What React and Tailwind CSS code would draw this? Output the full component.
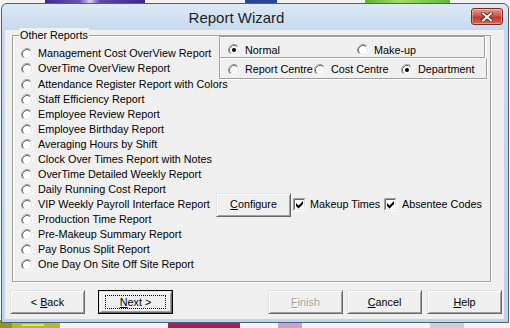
import React from "react";

const reports = [
  "Management Cost OverView Report",
  "OverTime OverView Report",
  "Attendance Register Report with Colors",
  "Staff Efficiency Report",
  "Employee Review Report",
  "Employee Birthday Report",
  "Averaging Hours by Shift",
  "Clock Over Times Report with Notes",
  "OverTime Detailed Weekly Report",
  "Daily Running Cost Report",
  "VIP Weekly Payroll Interface Report",
  "Production Time Report",
  "Pre-Makeup Summary Report",
  "Pay Bonus Split Report",
  "One Day On Site Off Site Report",
];

function Radio({ checked }) {
  return (
    <svg width="12" height="12" viewBox="0 0 12 12" className="block shrink-0">
      <circle cx="6" cy="6" r="4.5" fill="#fff" />
      <path d="M2.11 9.89 A5.5 5.5 0 0 1 9.89 2.11" fill="none" stroke="#a0a0a0" />
      <path d="M9.89 2.11 A5.5 5.5 0 0 1 2.11 9.89" fill="none" stroke="#ffffff" />
      <path d="M2.82 9.18 A4.5 4.5 0 0 1 9.18 2.82" fill="none" stroke="#696969" />
      <path d="M9.18 2.82 A4.5 4.5 0 0 1 2.82 9.18" fill="none" stroke="#e3e3e3" />
      {checked && <circle cx="6" cy="6" r="2" fill="#000" />}
    </svg>
  );
}

function CheckBox() {
  return (
    <svg width="13" height="13" viewBox="0 0 13 13" className="block shrink-0">
      <rect x="0" y="0" width="13" height="13" fill="#fff" />
      <path d="M0.5 12.5 V0.5 H12.5" stroke="#a0a0a0" fill="none" />
      <path d="M1.5 11.5 V1.5 H11.5" stroke="#696969" fill="none" />
      <path d="M0.5 12.5 H12.5 V0.5" stroke="#ffffff" fill="none" />
      <path d="M1.5 11.5 H11.5 V1.5" stroke="#e3e3e3" fill="none" />
      <polygon points="3,5 5.5,7.5 10,3 10,6 5.5,10.5 3,8" fill="#000" />
    </svg>
  );
}

function Row({ label, children }) {
  return (
    <div className="flex h-[15px] items-center">
      <div className="flex w-[195px] shrink-0 items-center">
        <Radio />
        <span className="ml-[5px] whitespace-nowrap leading-[15px]">{label}</span>
      </div>
      {children}
    </div>
  );
}

function Btn({ children, def, disabled, className = "" }) {
  const inner = (
    <div className="flex h-full w-full items-center justify-center border border-t-[#e3e3e3] border-l-[#e3e3e3] border-r-[#696969] border-b-[#696969] bg-[#f0f0f0] shadow-[inset_1px_1px_0_#ffffff,inset_-1px_-1px_0_#a0a0a0]">
      {def ? (
        <div className="flex h-[14px] w-[61px] items-center justify-center border border-dotted border-black">
          {children}
        </div>
      ) : (
        children
      )}
    </div>
  );
  return (
    <div
      className={
        "h-[24px] w-[75px] shrink-0 " +
        (def ? "border border-black " : "") +
        (disabled ? "text-[#a0a0a0] text-shadow-[1px_1px_0_#ffffff] " : "") +
        className
      }
    >
      {inner}
    </div>
  );
}

function Wallpaper() {
  return (
    <svg
      className="absolute inset-0"
      width="510"
      height="328"
      viewBox="0 0 510 328"
    >
      <defs>
        <linearGradient id="pur" x1="0" x2="1" y1="0" y2="0">
          <stop offset="0" stopColor="#3b2a86" />
          <stop offset="0.35" stopColor="#6a58b8" />
          <stop offset="0.45" stopColor="#d8d2ee" />
          <stop offset="0.55" stopColor="#5a48a8" />
          <stop offset="1" stopColor="#3b2a86" />
        </linearGradient>
        <linearGradient id="grn" x1="0" x2="1" y1="0" y2="0">
          <stop offset="0" stopColor="#5fb236" />
          <stop offset="0.4" stopColor="#9edc6a" />
          <stop offset="1" stopColor="#64b83a" />
        </linearGradient>
      </defs>
      <rect width="510" height="328" fill="#f4f4f4" />
      <rect x="45" y="0" width="100" height="6" fill="url(#pur)" />
      <rect x="245" y="0" width="32" height="6" fill="#27498f" />
      <rect x="365" y="0" width="85" height="6" fill="url(#grn)" />
      <rect x="0" y="320" width="12" height="8" fill="#8f9a1c" />
      <rect x="12" y="320" width="48" height="8" fill="#a9bf25" />
      <rect x="22" y="324" width="22" height="2" fill="#d9e86a" />
      <rect x="168" y="320" width="72" height="8" fill="#a51f5c" />
      <rect x="278" y="320" width="24" height="8" fill="#c6a3d4" />
      <rect x="430" y="320" width="34" height="8" fill="#cfcfcf" />
    </svg>
  );
}

export default function App() {
  return (
    <div className="relative h-[328px] w-[510px] overflow-hidden bg-white font-['Liberation_Sans',Arial,sans-serif] text-[10.8px] text-black">
      <Wallpaper />
      <div className="absolute left-[1px] top-[3px] flex h-[320px] w-[508px] flex-col rounded-t-[6px] border border-[#4e6076] bg-[linear-gradient(to_bottom,#dde9f5,#c6d9ee_26px,#bfd3ea)]">
        {/* Title bar */}
        <div className="flex h-[26px] shrink-0">
          <div className="flex flex-1 items-center justify-center pt-[1px] text-[15px] leading-[20px] text-[#1e1e1e]">
            Report Wizard
          </div>
          <div className="mr-[5px] mt-[4px] flex h-[17px] w-[32px] items-center justify-center rounded-[3px] border border-[#7a2a22] bg-[linear-gradient(to_bottom,#e59a90,#d0574b_45%,#c23a2c_55%,#cf6a58)] shadow-[inset_0_0_0_1px_rgba(255,255,255,0.35)]">
            <svg width="12" height="10" viewBox="0 0 12 10">
              <path d="M2 1.5 L10 8.5 M10 1.5 L2 8.5" stroke="#5a1a14" strokeWidth="3.6" strokeLinecap="square" />
              <path d="M2 1.5 L10 8.5 M10 1.5 L2 8.5" stroke="#ffffff" strokeWidth="2" strokeLinecap="square" />
            </svg>
          </div>
        </div>

        {/* Client area */}
        <div className="mb-[3px] ml-[3px] mr-[4px] flex flex-1 flex-col bg-[#f0f0f0]">
          {/* Group box */}
          <div className="relative ml-[7px] mt-[5px] h-[247px] w-[479px] border border-[#a0a0a0] shadow-[inset_1px_1px_0_#ffffff,1px_1px_0_#ffffff]">
            <span className="absolute -top-[8px] left-[6px] bg-[#f0f0f0] px-[1px] leading-[14px]">
              Other Reports
            </span>
            <div className="pl-[8px] pt-[0px]">
              <div className="flex">
                <div className="w-[198px] shrink-0 pt-[10px]">
                  <Row label={reports[0]} />
                  <Row label={reports[1]} />
                </div>
                <div className="-mb-[2px] flex flex-col">
                  <div className="flex h-[22px] w-[266px] items-center border border-[#a0a0a0] pl-[8px] pt-[6px] shadow-[inset_1px_1px_0_#ffffff,1px_1px_0_#ffffff]">
                    <div className="flex w-[129px] items-center">
                      <Radio checked />
                      <span className="ml-[5px]">Normal</span>
                    </div>
                    <div className="flex items-center">
                      <Radio />
                      <span className="ml-[5px]">Make-up</span>
                    </div>
                  </div>
                  <div className="flex h-[21px] w-[268px] items-center border border-t-0 border-[#a0a0a0] pl-[8px] pt-[3px] shadow-[inset_1px_0_0_#ffffff,1px_1px_0_#ffffff]">
                    <div className="flex w-[86px] items-center">
                      <Radio />
                      <span className="ml-[5px] whitespace-nowrap">Report Centre</span>
                    </div>
                    <div className="flex w-[87px] items-center">
                      <Radio />
                      <span className="ml-[5px] whitespace-nowrap">Cost Centre</span>
                    </div>
                    <div className="flex items-center">
                      <Radio checked />
                      <span className="ml-[5px]">Department</span>
                    </div>
                  </div>
                </div>
              </div>
              {reports.slice(2, 10).map((r) => (
                <Row key={r} label={r} />
              ))}
              <Row label={reports[10]}>
                <Btn className="-my-[4px] h-[23px]">
                  <span>
                    <span className="underline">C</span>onfigure
                  </span>
                </Btn>
                <div className="ml-[2px] flex w-[91px] shrink-0 items-center">
                  <CheckBox />
                  <span className="ml-[4px] whitespace-nowrap">Makeup Times</span>
                </div>
                <div className="flex w-[98px] shrink-0 items-center overflow-hidden">
                  <CheckBox />
                  <span className="ml-[5px] whitespace-nowrap">Absentee Codes</span>
                </div>
              </Row>
              {reports.slice(11).map((r) => (
                <Row key={r} label={r} />
              ))}
            </div>
          </div>

          {/* Buttons */}
          <div className="ml-[5px] mt-[8px] flex">
            <Btn>
              <span>
                &lt; <span className="underline">B</span>ack
              </span>
            </Btn>
            <Btn def className="ml-[13px]">
              <span>
                <span className="underline">N</span>ext &gt;
              </span>
            </Btn>
            <Btn disabled className="ml-[95px]">
              <span>
                <span className="underline">F</span>inish
              </span>
            </Btn>
            <Btn className="ml-[4px]">
              <span>
                <span className="underline">C</span>ancel
              </span>
            </Btn>
            <Btn className="ml-[5px]">
              <span>
                <span className="underline">H</span>elp
              </span>
            </Btn>
          </div>
        </div>
      </div>
    </div>
  );
}
